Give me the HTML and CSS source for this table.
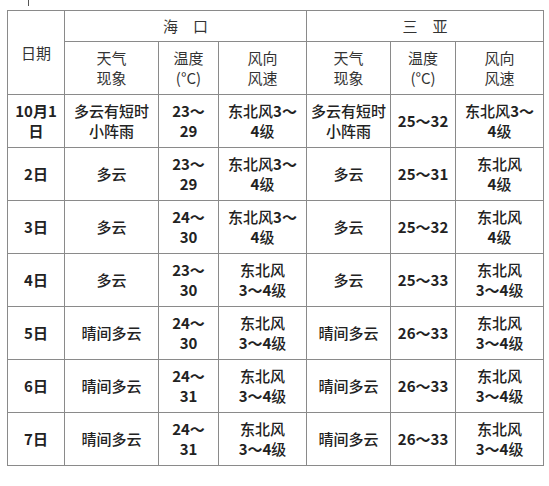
FILE: index.html
```html
<!DOCTYPE html>
<html lang="zh-CN">
<head>
<meta charset="utf-8">
<title>海口 三亚 天气</title>
<link rel="stylesheet" href="styles.css">
</head>
<body>
<div class="tick"></div>
<table class="wx">
  <colgroup>
    <col class="c-date"><col class="c-h1"><col class="c-h2"><col class="c-h3">
    <col class="c-s1"><col class="c-s2"><col class="c-s3">
  </colgroup>
  <thead>
    <tr class="r-city">
      <th rowspan="2" class="date-h">日期</th>
      <th colspan="3">海　口</th>
      <th colspan="3">三　亚</th>
    </tr>
    <tr class="r-sub">
      <th>天气<br>现象</th><th>温度<br>(°C)</th><th>风向<br>风速</th>
      <th>天气<br>现象</th><th>温度<br>(°C)</th><th>风向<br>风速</th>
    </tr>
  </thead>
  <tbody>
    <tr>
      <td class="d">10月1<br>日</td><td>多云有短时<br>小阵雨</td><td class="n">23～<br>29</td><td>东北风<b>3～</b><br><b>4</b>级</td>
      <td>多云有短时<br>小阵雨</td><td class="n">25～32</td><td>东北风<b>3～</b><br><b>4</b>级</td>
    </tr>
    <tr>
      <td class="d">2日</td><td>多云</td><td class="n">23～<br>29</td><td>东北风<b>3～</b><br><b>4</b>级</td>
      <td>多云</td><td class="n">25～31</td><td>东北风<br><b>4</b>级</td>
    </tr>
    <tr>
      <td class="d">3日</td><td>多云</td><td class="n">24～<br>30</td><td>东北风<b>3～</b><br><b>4</b>级</td>
      <td>多云</td><td class="n">25～32</td><td>东北风<br><b>4</b>级</td>
    </tr>
    <tr>
      <td class="d">4日</td><td>多云</td><td class="n">23～<br>30</td><td>东北风<br><b>3～4</b>级</td>
      <td>多云</td><td class="n">25～33</td><td>东北风<br><b>3～4</b>级</td>
    </tr>
    <tr>
      <td class="d">5日</td><td>晴间多云</td><td class="n">24～<br>30</td><td>东北风<br><b>3～4</b>级</td>
      <td>晴间多云</td><td class="n">26～33</td><td>东北风<br><b>3～4</b>级</td>
    </tr>
    <tr>
      <td class="d">6日</td><td>晴间多云</td><td class="n">24～<br>31</td><td>东北风<br><b>3～4</b>级</td>
      <td>晴间多云</td><td class="n">26～33</td><td>东北风<br><b>3～4</b>级</td>
    </tr>
    <tr>
      <td class="d">7日</td><td>晴间多云</td><td class="n">24～<br>31</td><td>东北风<br><b>3～4</b>级</td>
      <td>晴间多云</td><td class="n">26～33</td><td>东北风<br><b>3～4</b>级</td>
    </tr>
  </tbody>
</table>
</body>
</html>
```
FILE: styles.css
```css
html, body {
  margin: 0;
  padding: 0;
  background: #fff;
}
body {
  font-family: "Noto Sans CJK SC", "Noto Sans", sans-serif;
  font-size: 15px;
  line-height: 20px;
  color: #222;
}
.tick {
  width: 1px;
  height: 6px;
  margin-left: 28px;
  background: #555;
}
.wx {
  border-collapse: collapse;
  table-layout: fixed;
  width: 536px;
  margin: 4px 0 0 7px;
}
.c-date { width: 57px; }
.c-h1 { width: 94px; }
.c-h2 { width: 60px; }
.c-h3 { width: 88px; }
.c-s1 { width: 84px; }
.c-s2 { width: 65px; }
.c-s3 { width: 88px; }
.wx th, .wx td {
  border: 1px solid #8a8a8a;
  text-align: center;
  vertical-align: middle;
  padding: 0;
}
.wx th {
  font-weight: 400;
  color: #333;
}
.r-city { height: 31px; }
.r-sub { height: 53px; }
.wx tbody tr { height: 53px; }
.wx td {
  font-weight: 500;
  color: #222;
}
.wx td.d, .wx td.n, .wx td b {
  font-weight: 700;
}
```
